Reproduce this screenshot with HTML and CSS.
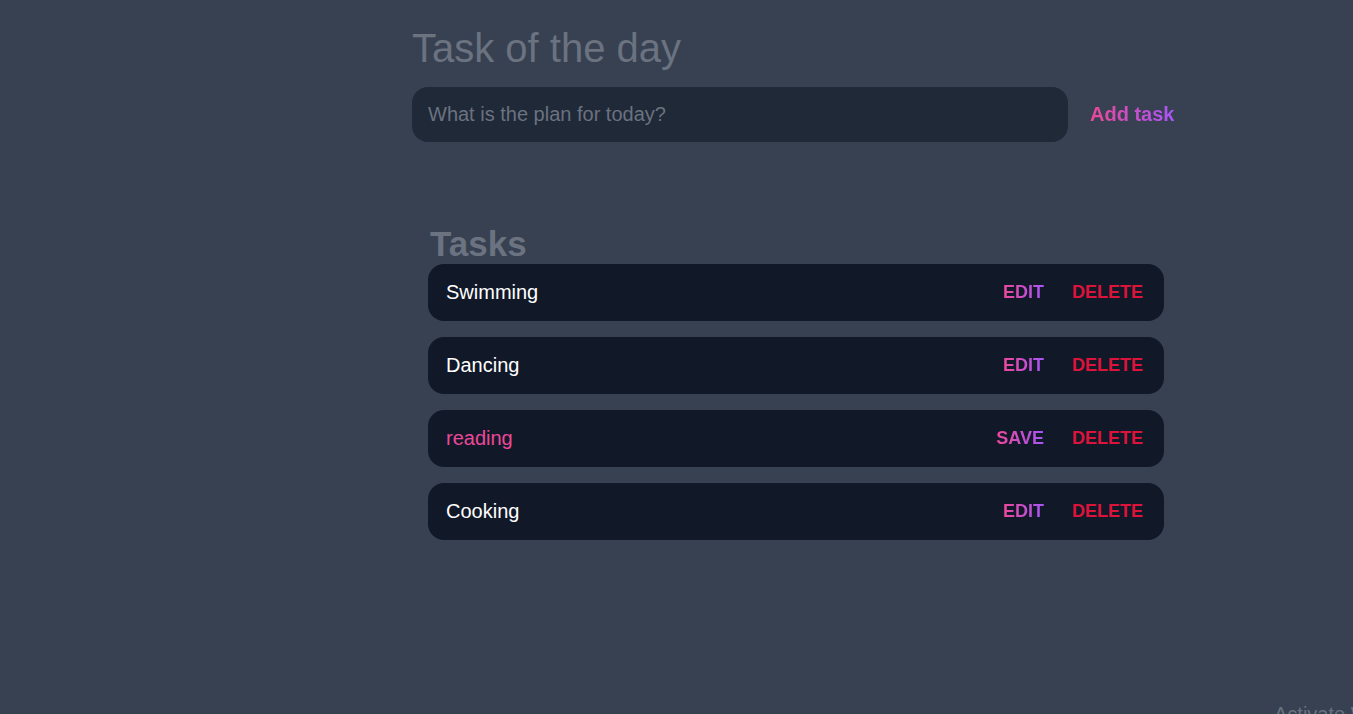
FILE: index.html
```html
<!DOCTYPE html>
<html lang="en">
<head>
<meta charset="utf-8">
<title>Task of the day</title>
<link rel="stylesheet" href="styles.css">
</head>
<body>
<main class="app">
  <h1 class="title">Task of the day</h1>
  <form class="new-task">
    <input class="new-task-input" type="text" placeholder="What is the plan for today?">
    <button class="add-btn" type="button"><span class="grad">Add task</span></button>
  </form>
  <section class="tasks">
    <h2 class="tasks-title">Tasks</h2>
    <ul class="task-list">
      <li class="task">
        <span class="task-text">Swimming</span>
        <div class="actions"><button class="act edit"><span class="grad">Edit</span></button><button class="act delete">Delete</button></div>
      </li>
      <li class="task">
        <span class="task-text">Dancing</span>
        <div class="actions"><button class="act edit"><span class="grad">Edit</span></button><button class="act delete">Delete</button></div>
      </li>
      <li class="task">
        <span class="task-text editing">reading</span>
        <div class="actions"><button class="act edit"><span class="grad">Save</span></button><button class="act delete">Delete</button></div>
      </li>
      <li class="task">
        <span class="task-text">Cooking</span>
        <div class="actions"><button class="act edit"><span class="grad">Edit</span></button><button class="act delete">Delete</button></div>
      </li>
    </ul>
  </section>
</main>
<div class="watermark">Activate Windows</div>
</body>
</html>
```

FILE: styles.css
```css
html, body {
  margin: 0;
  padding: 0;
  height: 100%;
  overflow: hidden;
}
body {
  background: #374151;
  font-family: "Liberation Sans", Arial, sans-serif;
  position: relative;
}
.app {
  padding: 24px 0 0 412px;
  width: 800px;
}
.title {
  margin: 0;
  font-size: 40px;
  font-weight: 400;
  line-height: 48px;
  color: #6b7280;
}
.new-task {
  display: flex;
  align-items: center;
  margin-top: 15px;
}
.new-task-input {
  width: 656px;
  height: 55px;
  box-sizing: border-box;
  border: none;
  outline: none;
  border-radius: 16px;
  background: #1f2937;
  padding: 0 16px;
  font-family: inherit;
  font-size: 20px;
  color: #e5e7eb;
}
.new-task-input::placeholder {
  color: #6b7280;
}
.add-btn {
  background: none;
  border: none;
  padding: 0;
  margin-left: 22px;
  font-family: inherit;
  font-size: 20px;
  font-weight: 700;
  white-space: nowrap;
  cursor: pointer;
}
.grad {
  background: linear-gradient(to right, #ec4899, #a855f7);
  -webkit-background-clip: text;
  background-clip: text;
  color: transparent;
}
.tasks {
  margin: 82px 0 0 16px;
  width: 736px;
}
.tasks-title {
  margin: 0;
  padding-left: 2px;
  font-size: 35px;
  font-weight: 700;
  line-height: 40px;
  color: #6b7280;
}
.task-list {
  list-style: none;
  margin: 0;
  padding: 0;
  display: flex;
  flex-direction: column;
  gap: 16px;
}
.task {
  display: flex;
  align-items: center;
  justify-content: space-between;
  height: 57px;
  padding: 0 21px 0 18px;
  border-radius: 16px;
  background: #111827;
}
.task-text {
  font-size: 20px;
  color: #ffffff;
}
.task-text.editing {
  color: #ec4899;
}
.actions {
  display: flex;
  align-items: center;
  gap: 28px;
}
.act {
  background: none;
  border: none;
  padding: 0;
  font-family: inherit;
  font-size: 18px;
  font-weight: 700;
  text-transform: uppercase;
  white-space: nowrap;
  cursor: pointer;
}
.delete {
  color: #dc143c;
}
.watermark {
  position: absolute;
  left: 1274px;
  top: 703px;
  font-size: 20px;
  color: rgba(200, 205, 215, 0.35);
  white-space: nowrap;
}
```
